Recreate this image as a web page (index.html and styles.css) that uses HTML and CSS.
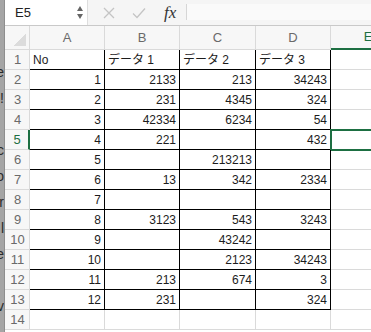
FILE: index.html
```html
<!DOCTYPE html>
<html lang="ja">
<head>
    <meta charset="UTF-8">
    <meta name="viewport" content="width=device-width, initial-scale=1.0">
    <title>Sheet</title>
    <link rel="stylesheet" href="styles.css">
</head>
<body>
<div class="window">
    <div class="desk">
        <div class="desk-lines">e<br>!<br>&nbsp;<br>c<br>o<br>r<br>l<br>e<br>&nbsp;<br>v</div>
    </div>
    <div class="app">
        <div class="formula-bar">
            <div class="name-box">
                <span>E5</span>
                <span class="spin"><i class="up"></i><i class="down"></i></span>
            </div>
            <div class="fx-buttons">
                <svg class="icon" width="12" height="12" viewBox="0 0 12 12"><path d="M1 1L11 11M11 1L1 11" stroke="#c4c4c4" stroke-width="1.3" fill="none"/></svg>
                <svg class="icon" width="14" height="12" viewBox="0 0 14 12"><path d="M1 6.5L5 10.5L13 1.5" stroke="#c4c4c4" stroke-width="1.3" fill="none"/></svg>
                <span class="fx">fx</span>
            </div>
            <div class="formula-input"></div>
        </div>

        <div class="sheet">
            <div class="hd corner"></div>
            <div class="hd col">A</div>
            <div class="hd col">B</div>
            <div class="hd col">C</div>
            <div class="hd col">D</div>
            <div class="hd col sel-col">E</div>

            <div class="hd rh">1</div>
            <div class="c d">No</div><div class="c d">データ 1</div><div class="c d">データ 2</div><div class="c d">データ 3</div><div class="c"></div>

            <div class="hd rh">2</div>
            <div class="c d n">1</div><div class="c d n">2133</div><div class="c d n">213</div><div class="c d n">34243</div><div class="c"></div>

            <div class="hd rh">3</div>
            <div class="c d n">2</div><div class="c d n">231</div><div class="c d n">4345</div><div class="c d n">324</div><div class="c"></div>

            <div class="hd rh">4</div>
            <div class="c d n">3</div><div class="c d n">42334</div><div class="c d n">6234</div><div class="c d n">54</div><div class="c"></div>

            <div class="hd rh sel-row">5</div>
            <div class="c d n">4</div><div class="c d n">221</div><div class="c d n"></div><div class="c d n">432</div><div class="c active"></div>

            <div class="hd rh">6</div>
            <div class="c d n">5</div><div class="c d n"></div><div class="c d n">213213</div><div class="c d n"></div><div class="c"></div>

            <div class="hd rh">7</div>
            <div class="c d n">6</div><div class="c d n">13</div><div class="c d n">342</div><div class="c d n">2334</div><div class="c"></div>

            <div class="hd rh">8</div>
            <div class="c d n">7</div><div class="c d n"></div><div class="c d n"></div><div class="c d n"></div><div class="c"></div>

            <div class="hd rh">9</div>
            <div class="c d n">8</div><div class="c d n">3123</div><div class="c d n">543</div><div class="c d n">3243</div><div class="c"></div>

            <div class="hd rh">10</div>
            <div class="c d n">9</div><div class="c d n"></div><div class="c d n">43242</div><div class="c d n"></div><div class="c"></div>

            <div class="hd rh">11</div>
            <div class="c d n">10</div><div class="c d n"></div><div class="c d n">2123</div><div class="c d n">34243</div><div class="c"></div>

            <div class="hd rh">12</div>
            <div class="c d n">11</div><div class="c d n">213</div><div class="c d n">674</div><div class="c d n">3</div><div class="c"></div>

            <div class="hd rh">13</div>
            <div class="c d n">12</div><div class="c d n">231</div><div class="c d n"></div><div class="c d n">324</div><div class="c"></div>

            <div class="hd rh">14</div>
            <div class="c"></div><div class="c"></div><div class="c"></div><div class="c"></div><div class="c"></div>
        </div>
    </div>
</div>
</body>
</html>
```

FILE: styles.css
```css
* {
    box-sizing: border-box;
}

body {
    margin: 0;
    width: 371px;
    height: 332px;
    overflow: hidden;
    background: #ececec;
    font-family: "Liberation Sans", "Noto Sans CJK JP", sans-serif;
    font-size: 12px;
    color: #1c1c1c;
}

.window {
    display: flex;
    height: 332px;
}

/* window behind excel, only its edge is visible */
.desk {
    width: 5px;
    flex: none;
    background: #a5a5a5;
    border-right: 1px solid #8e8e8e;
    overflow: hidden;
    padding-top: 59px;
}

.desk-lines {
    width: 11px;
    margin-left: -7px;
    text-align: right;
    font: 14px/26px "Liberation Sans", sans-serif;
    color: #2b2b2b;
}

.app {
    flex: 1;
    min-width: 0;
    display: flex;
    flex-direction: column;
    background: #fff;
    overflow: hidden;
}

/* formula bar */
.formula-bar {
    height: 26px;
    flex: none;
    display: flex;
    background: #f5f5f5;
    border-bottom: 1px solid #c9c9c9;
}

.name-box {
    width: 83px;
    flex: none;
    display: flex;
    align-items: center;
    justify-content: space-between;
    padding: 0 4px 0 10px;
    background: #fff;
    border-right: 1px solid #dedede;
    font: 13px "Liberation Sans", sans-serif;
    color: #222;
}

.spin {
    display: flex;
    flex-direction: column;
    gap: 3px;
}

.spin i {
    width: 0;
    height: 0;
    border-left: 3.5px solid transparent;
    border-right: 3.5px solid transparent;
}

.spin .up {
    border-bottom: 5px solid #666;
}

.spin .down {
    border-top: 5px solid #666;
}

.fx-buttons {
    width: 98px;
    flex: none;
    display: flex;
    align-items: center;
    padding-left: 15px;
    gap: 17px;
}

.fx {
    font: italic 17px "Liberation Serif", serif;
    color: #333;
    margin-left: 1px;
}

.formula-input {
    flex: 1;
    margin: 4px 0 5px;
    border-left: 1px solid #d6d6d6;
    background: #fafafa;
}

/* grid, column E runs past the window edge */
.sheet {
    display: grid;
    width: 401px;
    grid-template-columns: 25px 75px 75px 76px 75px 75px;
    grid-template-rows: 24px;
    grid-auto-rows: 20px;
    background: #fff;
}

.hd {
    background: #f7f7f7;
    color: #6a6a6a;
    text-align: center;
    font: 13px "Liberation Sans", sans-serif;
    border-right: 1px solid #dadada;
    border-bottom: 1px solid #dadada;
}

.col {
    line-height: 23px;
}

.rh {
    line-height: 20px;
    padding-left: 1px;
}

.corner {
    background: #f7f7f7 linear-gradient(to bottom right, transparent 50%, #dcdcdc 50%) no-repeat right 3px bottom 3px / 13px 13px;
}

.sel-col {
    color: #1d6f42;
    border-bottom: 2px solid #1d6f42;
    line-height: 22px;
}

.sel-row {
    color: #1d6f42;
    border-right: 2px solid #1d6f42;
}

.c {
    border-right: 1px solid #dadada;
    border-bottom: 1px solid #dadada;
    padding: 0 3px;
    line-height: 21px;
    white-space: nowrap;
    overflow: hidden;
}

.d {
    border-right-color: #000;
    border-bottom-color: #000;
}

.n {
    text-align: right;
}

.active {
    outline: 2px solid #1d6f42;
    outline-offset: -1px;
}
```
